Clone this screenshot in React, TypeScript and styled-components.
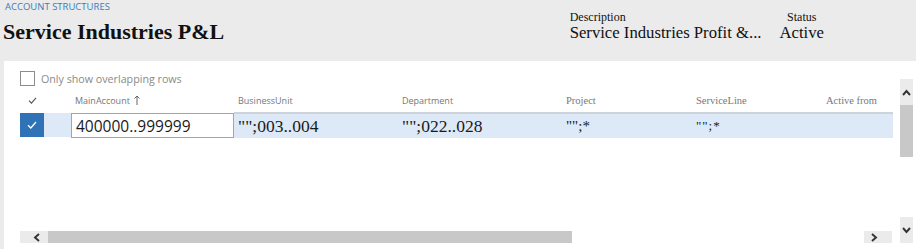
import React from "react";
import styled, { createGlobalStyle } from "styled-components";

const Global = createGlobalStyle`
  html, body { margin: 0; padding: 0; background: #ffffff; }
  body { width: 916px; height: 249px; overflow: hidden; }
  #root { width: 916px; height: 249px; }
`;

const SANS = `"Open Sans", "Noto Sans", sans-serif`;
const SERIF = `"Liberation Serif", "Times New Roman", serif`;

const Page = styled.div`
  display: flex;
  flex-direction: column;
  width: 916px;
  height: 249px;
`;

const Header = styled.header`
  height: 61px;
  flex: none;
  background: #ebebeb;
  display: flex;
  justify-content: space-between;
  padding: 0 92px 0 3px;
  box-sizing: border-box;
`;

const TitleBlock = styled.div`
  display: flex;
  flex-direction: column;
`;

const Breadcrumb = styled.div`
  font-family: ${SANS};
  font-size: 9.5px;
  line-height: 14px;
  color: #3b7bbd;
  padding-left: 2px;
  text-transform: uppercase;
`;

const Title = styled.h1`
  margin: 5px 0 0;
  font-family: ${SERIF};
  font-weight: bold;
  font-size: 22px;
  line-height: 26px;
  color: #111;
`;

const Fields = styled.div`
  display: flex;
  gap: 18px;
  padding-top: 10px;
`;

const Field = styled.div<{ $center?: boolean }>`
  display: flex;
  flex-direction: column;
  align-items: ${(p) => (p.$center ? "center" : "flex-start")};
  font-family: ${SERIF};
  color: #111;
`;

const FieldLabel = styled.div`
  font-size: 12px;
  line-height: 14px;
`;

const FieldValue = styled.div`
  font-size: 16.7px;
  line-height: 17px;
`;

const Body = styled.div`
  flex: 1;
  display: flex;
  min-height: 0;
`;

const Gutter = styled.div`
  width: 4px;
  background: #ebebeb;
`;

const Main = styled.div`
  flex: 1;
  display: flex;
  gap: 7px;
  padding: 0 3px 6px 16px;
`;

const GridCol = styled.div`
  flex: 1;
  display: flex;
  flex-direction: column;
  padding-top: 10px;
`;

const FilterRow = styled.label`
  display: flex;
  align-items: center;
  gap: 6px;
  height: 15px;
  font-family: ${SANS};
  font-size: 10.7px;
  color: #8a8a8a;
`;

const Checkbox = styled.span`
  width: 15px;
  height: 15px;
  box-sizing: border-box;
  border: 1px solid #8c8c8c;
  background: #fff;
`;

const Table = styled.div`
  display: grid;
  grid-template-columns: 24px 27px 163px 164px 164px 130px 130px 1fr;
  grid-template-rows: 26px 26px;
`;

const HeadCell = styled.div<{ $serif?: boolean; $center?: boolean }>`
  display: flex;
  align-items: center;
  justify-content: ${(p) => (p.$center ? "center" : "flex-start")};
  padding: 2px 0 0 ${(p) => (p.$center ? 0 : 4)}px;
  font-family: ${(p) => (p.$serif ? SERIF : SANS)};
  font-size: ${(p) => (p.$serif ? "10.5px" : "9px")};
  color: #777;
  white-space: nowrap;
  gap: 4px;
`;

const SelectCell = styled.div`
  margin: 1px 0;
  background: #2f73b6;
  display: flex;
  align-items: center;
  justify-content: center;
`;

const BlankCell = styled.div`
  margin: 1px 0;
  background: #dde9f7;
`;

const InputCell = styled.div`
  box-sizing: border-box;
  margin: 1px 0 0;
  border: 1px solid #8eaacb;
  background: #fff;
  display: flex;
  align-items: center;
  padding-left: 4px;
  font-family: ${SANS};
  font-size: 15.5px;
  color: #1a1a1a;
`;

const DataCell = styled.div<{ $size?: number; $spacing?: number }>`
  box-sizing: border-box;
  border-top: 2px solid #cdd3da;
  background: #dde9f7;
  display: flex;
  align-items: center;
  padding-left: 4px;
  font-family: ${SERIF};
  font-size: ${(p) => p.$size ?? 17.5}px;
  letter-spacing: ${(p) => p.$spacing ?? 0}px;
  color: #1a1a1a;
  white-space: nowrap;
  overflow: hidden;
`;

const Spacer = styled.div`
  flex: 1;
`;

const HScroll = styled.div`
  height: 12px;
  display: flex;
  margin-right: 1px;
`;

const HButton = styled.div<{ $side: "left" | "right" }>`
  width: 28px;
  background: #ebebeb;
  display: flex;
  align-items: center;
  justify-content: ${(p) => (p.$side === "left" ? "flex-end" : "flex-start")};
  padding: 0 6px;
  box-sizing: border-box;
`;

const HThumb = styled.div`
  width: 524px;
  background: #c8c8c8;
`;

const Track = styled.div`
  flex: 1;
  background: #fff;
`;

const VScroll = styled.div`
  width: 13px;
  margin-top: 18px;
  display: flex;
  flex-direction: column;
`;

const VButton = styled.div<{ $side: "top" | "bottom" }>`
  height: 26px;
  background: #ebebeb;
  display: flex;
  justify-content: center;
  align-items: ${(p) => (p.$side === "top" ? "flex-end" : "flex-start")};
  padding: ${(p) => (p.$side === "top" ? "0 0 7px" : "9px 0 0")};
  box-sizing: border-box;
`;

const VThumb = styled.div`
  height: 52px;
  background: #c8c8c8;
`;

const Check = ({ color, w = 9 }: { color: string; w?: number }) => (
  <svg width={w} height={Math.round(w * 0.8)} viewBox="0 0 10 8">
    <polyline points="1,4.2 3.8,7 9,1" fill="none" stroke={color} strokeWidth="1.3" />
  </svg>
);

const Chevron = ({ dir }: { dir: "left" | "right" | "up" | "down" }) => {
  const pts = {
    left: "6,1 2,4.5 6,8",
    right: "2,1 6,4.5 2,8",
    up: "1,6 4.5,2 8,6",
    down: "1,2 4.5,6 8,2",
  }[dir];
  return (
    <svg width="9" height="9" viewBox="0 0 9 9">
      <polyline points={pts} fill="none" stroke="#333" strokeWidth="1.9" />
    </svg>
  );
};

const Arrow = () => (
  <svg width="6" height="10" viewBox="0 0 6 10">
    <line x1="3" y1="1" x2="3" y2="10" stroke="#666" strokeWidth="1" />
    <polyline points="0.5,3.5 3,1 5.5,3.5" fill="none" stroke="#666" strokeWidth="1" />
  </svg>
);

export default function App() {
  return (
    <Page>
      <Global />
      <Header>
        <TitleBlock>
          <Breadcrumb>Account structures</Breadcrumb>
          <Title>Service Industries P&amp;L</Title>
        </TitleBlock>
        <Fields>
          <Field>
            <FieldLabel>Description</FieldLabel>
            <FieldValue>Service Industries Profit &amp;...</FieldValue>
          </Field>
          <Field $center>
            <FieldLabel>Status</FieldLabel>
            <FieldValue>Active</FieldValue>
          </Field>
        </Fields>
      </Header>
      <Body>
        <Gutter />
        <Main>
          <GridCol>
            <FilterRow>
              <Checkbox />
              Only show overlapping rows
            </FilterRow>
            <Table>
              <HeadCell $center>
                <Check color="#555" w={9} />
              </HeadCell>
              <HeadCell />
              <HeadCell>
                MainAccount <Arrow />
              </HeadCell>
              <HeadCell>BusinessUnit</HeadCell>
              <HeadCell>Department</HeadCell>
              <HeadCell $serif>Project</HeadCell>
              <HeadCell $serif>ServiceLine</HeadCell>
              <HeadCell $serif>Active from</HeadCell>

              <SelectCell>
                <Check color="#fff" w={10} />
              </SelectCell>
              <BlankCell />
              <InputCell>400000..999999</InputCell>
              <DataCell>"";003..004</DataCell>
              <DataCell>"";022..028</DataCell>
              <DataCell $size={15}>"";*</DataCell>
              <DataCell $size={13} $spacing={1}>"";*</DataCell>
              <DataCell />
            </Table>
            <Spacer />
            <HScroll>
              <HButton $side="left">
                <Chevron dir="left" />
              </HButton>
              <HThumb />
              <Track />
              <HButton $side="right">
                <Chevron dir="right" />
              </HButton>
            </HScroll>
          </GridCol>
          <VScroll>
            <VButton $side="top">
              <Chevron dir="up" />
            </VButton>
            <VThumb />
            <Track />
            <VButton $side="bottom">
              <Chevron dir="down" />
            </VButton>
          </VScroll>
        </Main>
      </Body>
    </Page>
  );
}
